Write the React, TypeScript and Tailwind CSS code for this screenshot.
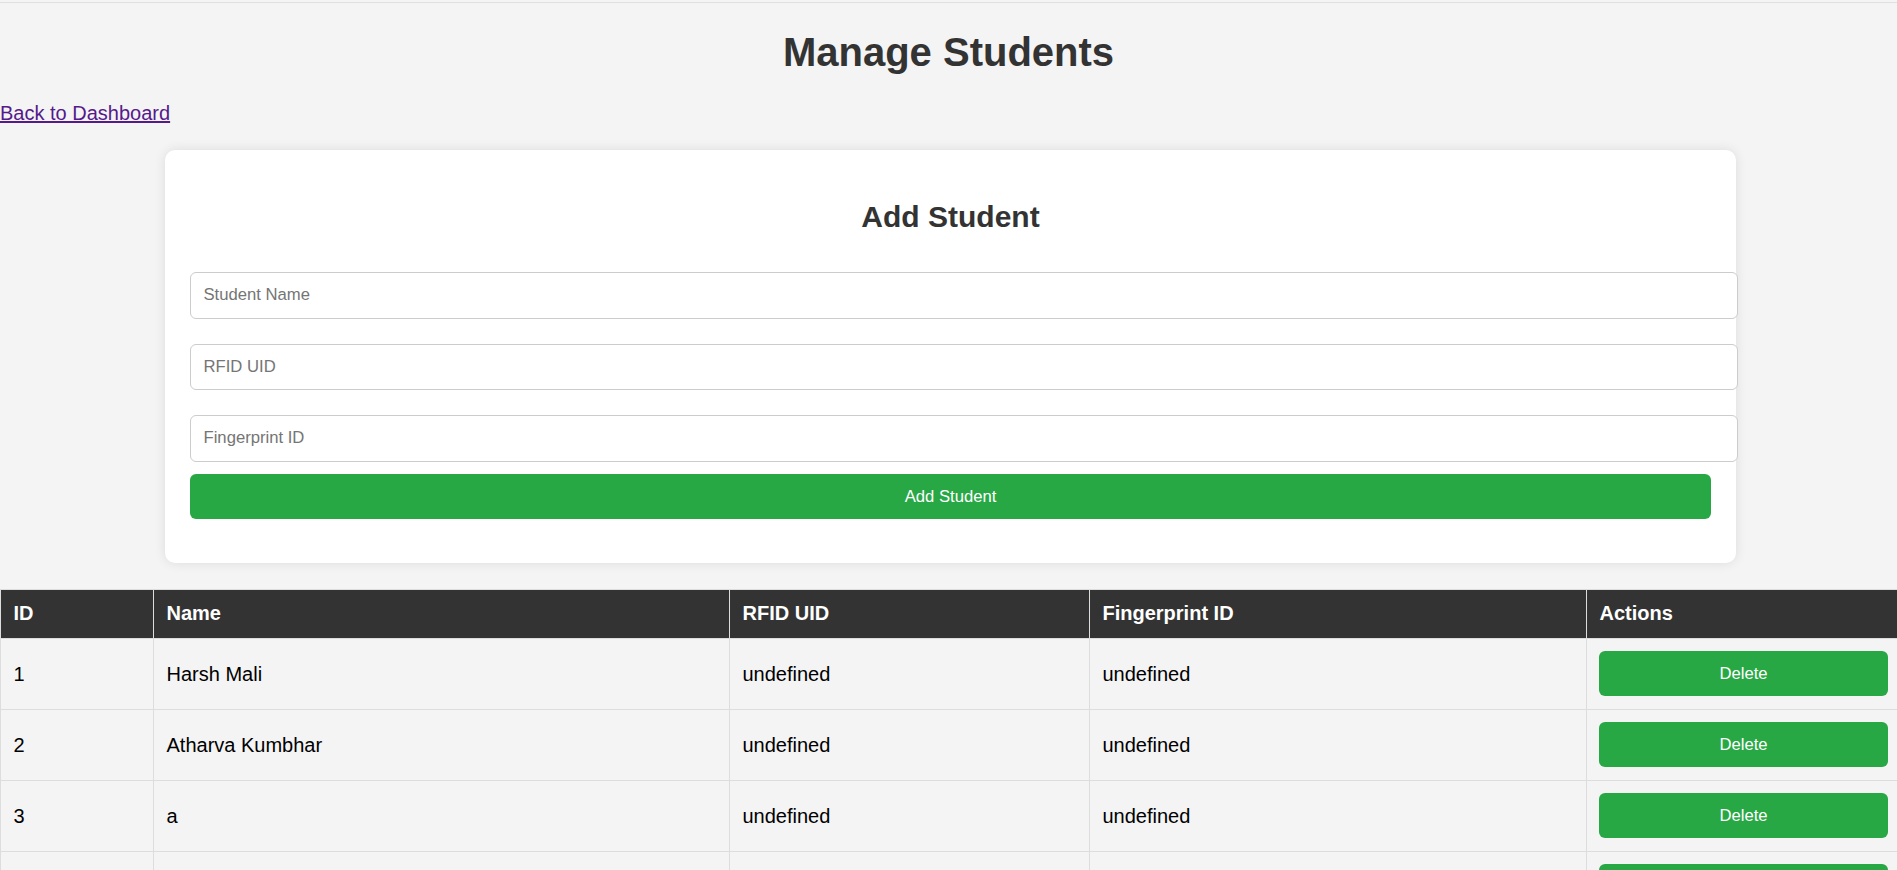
import { useState } from 'react';

type Student = {
  id: number;
  name: string;
  rfid?: string;
  fingerprint?: string;
};

const INITIAL: Student[] = [
  { id: 1, name: 'Harsh Mali' },
  { id: 2, name: 'Atharva Kumbhar' },
  { id: 3, name: 'a' },
  { id: 4, name: 'b' },
];

export default function App() {
  const [students, setStudents] = useState<Student[]>(INITIAL);
  const [name, setName] = useState('');
  const [rfid, setRfid] = useState('');
  const [finger, setFinger] = useState('');

  function addStudent(e: React.FormEvent) {
    e.preventDefault();
    if (!name) return;
    const nextId = students.length ? Math.max(...students.map((s) => s.id)) + 1 : 1;
    setStudents([...students, { id: nextId, name, rfid: rfid || undefined, fingerprint: finger || undefined }]);
    setName('');
    setRfid('');
    setFinger('');
  }

  function remove(id: number) {
    setStudents(students.filter((s) => s.id !== id));
  }

  return (
    <div className="min-h-screen overflow-hidden bg-[#f4f4f4] font-['Liberation_Sans',Arial,sans-serif] text-[20px]">
      <div className="h-[3px] border-b border-[#e0e0e0]" />

      <h1 className="mt-[26px] text-center text-[40px] font-bold leading-[46px] text-[#333]">Manage Students</h1>

      <div className="mt-[27px] leading-[23px]">
        <a href="#" className="text-[#551a8b] underline">Back to Dashboard</a>
      </div>

      {/* Add form */}
      <div className="mt-[25px] ml-[165px] w-[1571px] rounded-[10px] bg-white px-[25px] pt-[25px] pb-[44px] shadow-[0_0_12px_rgba(0,0,0,0.1)]">
        <h2 className="mt-[25px] mb-[25px] text-center text-[30px] font-bold leading-[34.5px] text-[#333]">Add Student</h2>
        <form onSubmit={addStudent} className="flex flex-col">
          <input
            value={name}
            onChange={(e) => setName(e.target.value)}
            placeholder="Student Name"
            className="my-[12.5px] h-[46.5px] w-[1548px] rounded-[6px] border border-[#ccc] bg-white px-[12.5px] text-[16.67px] outline-none placeholder:text-[#757575]"
          />
          <input
            value={rfid}
            onChange={(e) => setRfid(e.target.value)}
            placeholder="RFID UID"
            className="my-[12.5px] h-[46.5px] w-[1548px] rounded-[6px] border border-[#ccc] bg-white px-[12.5px] text-[16.67px] outline-none placeholder:text-[#757575]"
          />
          <input
            value={finger}
            onChange={(e) => setFinger(e.target.value)}
            placeholder="Fingerprint ID"
            className="mt-[12.5px] mb-[12.5px] h-[46.5px] w-[1548px] rounded-[6px] border border-[#ccc] bg-white px-[12.5px] text-[16.67px] outline-none placeholder:text-[#757575]"
          />
          <button
            type="submit"
            className="h-[45px] w-[1521px] cursor-pointer rounded-[6px] bg-[#28a745] text-[16.67px] text-white"
          >
            Add Student
          </button>
        </form>
      </div>

      {/* Students table */}
      <table className="mt-[26px] w-[1897px] table-fixed border-collapse">
        <colgroup>
          <col className="w-[153px]" />
          <col className="w-[576px]" />
          <col className="w-[360px]" />
          <col className="w-[497px]" />
          <col className="w-[311px]" />
        </colgroup>
        <thead>
          <tr className="bg-[#333] text-white">
            {['ID', 'Name', 'RFID UID', 'Fingerprint ID', 'Actions'].map((h) => (
              <th key={h} className="h-[48.5px] border border-[#ddd] px-[12.5px] text-left font-bold leading-[23px]">
                {h}
              </th>
            ))}
          </tr>
        </thead>
        <tbody>
          {students.map((s) => (
            <tr key={s.id} className="text-black">
              <td className="h-[71px] border border-[#ddd] px-[12.5px]">{s.id}</td>
              <td className="border border-[#ddd] px-[12.5px]">{s.name}</td>
              <td className="border border-[#ddd] px-[12.5px]">{String(s.rfid)}</td>
              <td className="border border-[#ddd] px-[12.5px]">{String(s.fingerprint)}</td>
              <td className="border border-[#ddd] pl-[12px] pr-[8px]">
                <button
                  onClick={() => remove(s.id)}
                  className="block h-[45px] w-[289px] cursor-pointer rounded-[6px] bg-[#28a745] text-[16.67px] text-white"
                >
                  Delete
                </button>
              </td>
            </tr>
          ))}
        </tbody>
      </table>
    </div>
  );
}
